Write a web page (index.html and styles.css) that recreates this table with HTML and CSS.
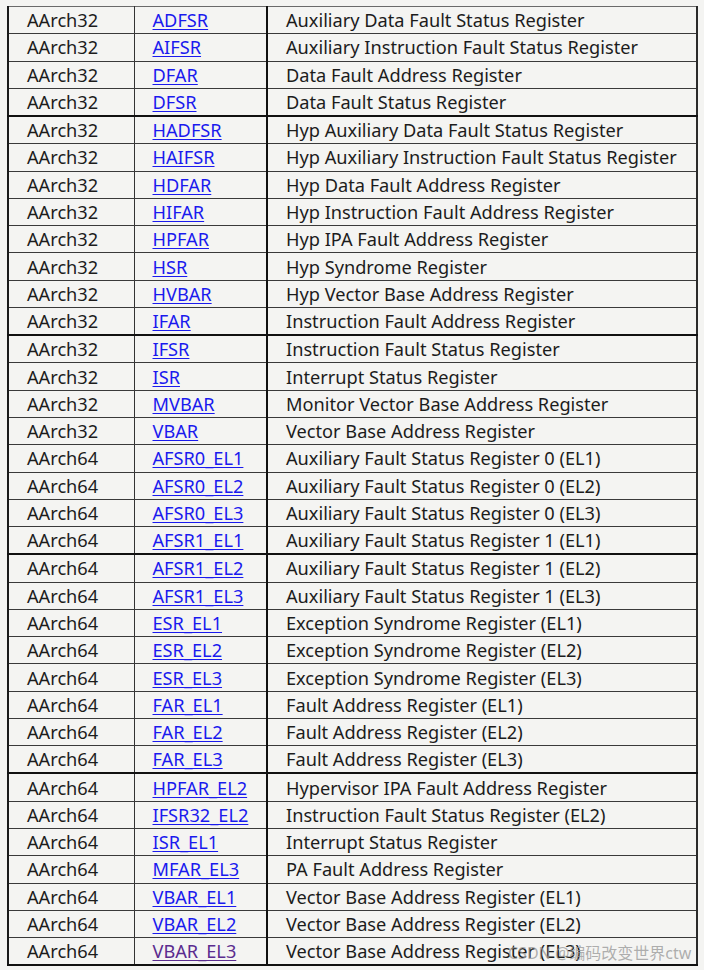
FILE: index.html
```html
<!DOCTYPE html>
<html>
<head>
<meta charset="utf-8">
<link rel="stylesheet" href="styles.css">
</head>
<body>
<div class="page">
  <table class="regs">
    <colgroup><col class="c1"><col class="c2"><col class="c3"></colgroup>
    <tbody>
      <tr><td>AArch32</td><td><a href="#">ADFSR</a></td><td>Auxiliary Data Fault Status Register</td></tr>
      <tr><td>AArch32</td><td><a href="#">AIFSR</a></td><td>Auxiliary Instruction Fault Status Register</td></tr>
      <tr><td>AArch32</td><td><a href="#">DFAR</a></td><td>Data Fault Address Register</td></tr>
      <tr class="sep"><td>AArch32</td><td><a href="#">DFSR</a></td><td>Data Fault Status Register</td></tr>
      <tr><td>AArch32</td><td><a href="#">HADFSR</a></td><td>Hyp Auxiliary Data Fault Status Register</td></tr>
      <tr><td>AArch32</td><td><a href="#">HAIFSR</a></td><td>Hyp Auxiliary Instruction Fault Status Register</td></tr>
      <tr><td>AArch32</td><td><a href="#">HDFAR</a></td><td>Hyp Data Fault Address Register</td></tr>
      <tr><td>AArch32</td><td><a href="#">HIFAR</a></td><td>Hyp Instruction Fault Address Register</td></tr>
      <tr><td>AArch32</td><td><a href="#">HPFAR</a></td><td>Hyp IPA Fault Address Register</td></tr>
      <tr><td>AArch32</td><td><a href="#">HSR</a></td><td>Hyp Syndrome Register</td></tr>
      <tr><td>AArch32</td><td><a href="#">HVBAR</a></td><td>Hyp Vector Base Address Register</td></tr>
      <tr class="sep"><td>AArch32</td><td><a href="#">IFAR</a></td><td>Instruction Fault Address Register</td></tr>
      <tr><td>AArch32</td><td><a href="#">IFSR</a></td><td>Instruction Fault Status Register</td></tr>
      <tr><td>AArch32</td><td><a href="#">ISR</a></td><td>Interrupt Status Register</td></tr>
      <tr><td>AArch32</td><td><a href="#">MVBAR</a></td><td>Monitor Vector Base Address Register</td></tr>
      <tr><td>AArch32</td><td><a href="#">VBAR</a></td><td>Vector Base Address Register</td></tr>
      <tr><td>AArch64</td><td><a href="#">AFSR0_EL1</a></td><td>Auxiliary Fault Status Register 0 (EL1)</td></tr>
      <tr><td>AArch64</td><td><a href="#">AFSR0_EL2</a></td><td>Auxiliary Fault Status Register 0 (EL2)</td></tr>
      <tr><td>AArch64</td><td><a href="#">AFSR0_EL3</a></td><td>Auxiliary Fault Status Register 0 (EL3)</td></tr>
      <tr class="sep"><td>AArch64</td><td><a href="#">AFSR1_EL1</a></td><td>Auxiliary Fault Status Register 1 (EL1)</td></tr>
      <tr><td>AArch64</td><td><a href="#">AFSR1_EL2</a></td><td>Auxiliary Fault Status Register 1 (EL2)</td></tr>
      <tr><td>AArch64</td><td><a href="#">AFSR1_EL3</a></td><td>Auxiliary Fault Status Register 1 (EL3)</td></tr>
      <tr><td>AArch64</td><td><a href="#">ESR_EL1</a></td><td>Exception Syndrome Register (EL1)</td></tr>
      <tr><td>AArch64</td><td><a href="#">ESR_EL2</a></td><td>Exception Syndrome Register (EL2)</td></tr>
      <tr><td>AArch64</td><td><a href="#">ESR_EL3</a></td><td>Exception Syndrome Register (EL3)</td></tr>
      <tr><td>AArch64</td><td><a href="#">FAR_EL1</a></td><td>Fault Address Register (EL1)</td></tr>
      <tr><td>AArch64</td><td><a href="#">FAR_EL2</a></td><td>Fault Address Register (EL2)</td></tr>
      <tr class="sep"><td>AArch64</td><td><a href="#">FAR_EL3</a></td><td>Fault Address Register (EL3)</td></tr>
      <tr><td>AArch64</td><td><a href="#">HPFAR_EL2</a></td><td>Hypervisor IPA Fault Address Register</td></tr>
      <tr><td>AArch64</td><td><a href="#">IFSR32_EL2</a></td><td>Instruction Fault Status Register (EL2)</td></tr>
      <tr><td>AArch64</td><td><a href="#">ISR_EL1</a></td><td>Interrupt Status Register</td></tr>
      <tr><td>AArch64</td><td><a href="#">MFAR_EL3</a></td><td>PA Fault Address Register</td></tr>
      <tr><td>AArch64</td><td><a href="#">VBAR_EL1</a></td><td>Vector Base Address Register (EL1)</td></tr>
      <tr><td>AArch64</td><td><a href="#">VBAR_EL2</a></td><td>Vector Base Address Register (EL2)</td></tr>
      <tr><td>AArch64</td><td><a class="visited" href="#">VBAR_EL3</a></td><td>Vector Base Address Register (EL3)</td></tr>
    </tbody>
  </table>
  <div class="watermark">CSDN @编码改变世界ctw</div>
</div>
</body>
</html>
```

FILE: styles.css
```css
html, body {
  margin: 0;
  padding: 0;
  background: #f4f4f2;
}
.page {
  position: relative;
  width: 704px;
  height: 970px;
  padding: 6px 0 0 7px;
  box-sizing: border-box;
  font-family: "Noto Sans", "Open Sans", sans-serif;
}
.regs {
  border-collapse: collapse;
  table-layout: fixed;
  width: 691px;
  font-size: 18.2px;
  color: #1c1c1c;
  border-top: 1px solid #6a6a6a;
  border-left: 2px solid #1a1a1a;
  border-right: 2px solid #2a2a2a;
  border-bottom: 2px solid #111;
}
.c1 { width: 126px; }
.c2 { width: 133px; }
.c3 { width: auto; }
.regs td {
  height: 26.28px;
  padding: 0 0 0 18px;
  border-bottom: 1px solid #3a3a3a;
  white-space: nowrap;
  line-height: 26px;
  vertical-align: middle;
}
.regs td:nth-child(1) {
  border-right: 1px solid #333;
}
.regs td:nth-child(2) {
  border-right: 2px solid #111;
}
.regs tr.sep td {
  border-bottom: 2px solid #111;
}
.regs a {
  color: #1a1aee;
  text-decoration: underline;
  text-underline-offset: 2px;
}
.regs a.visited {
  color: #5b2c8f;
}
.watermark {
  position: absolute;
  left: 508px;
  top: 940px;
  font-family: "Noto Sans", "Noto Sans CJK SC", sans-serif;
  font-size: 16px;
  color: rgba(150, 150, 150, 0.75);
  white-space: nowrap;
}
```
